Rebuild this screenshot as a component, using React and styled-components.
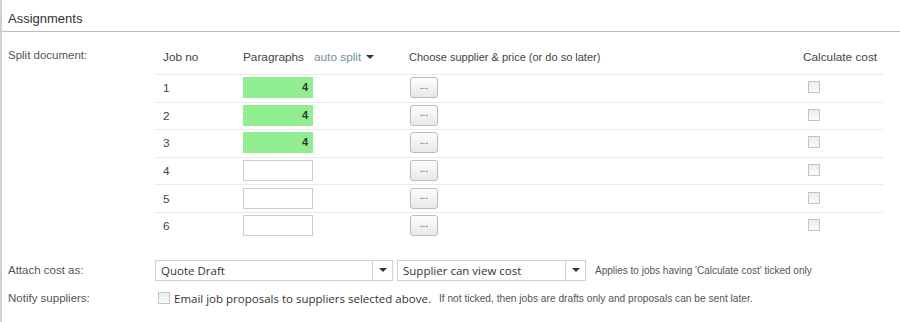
import React from 'react'
import styled, { createGlobalStyle } from 'styled-components'

const GlobalStyle = createGlobalStyle`
  html, body {
    margin: 0;
    padding: 0;
    background: #fff;
  }
  body {
    font-family: "Liberation Sans", Arial, sans-serif;
    color: #444;
  }
`

const Panel = styled.div`
  width: 900px;
  height: 322px;
  box-sizing: border-box;
  border-left: 2px solid #cfcfcf;
  overflow: hidden;
`

const Title = styled.div`
  height: 32px;
  box-sizing: border-box;
  padding: 11px 0 0 6px;
  font-size: 13px;
  color: #333;
  border-bottom: 1px solid #bdbdbd;
`

const Body = styled.div`
  display: flex;
  flex-direction: column;
`

const Field = styled.div`
  display: flex;
  align-items: ${p => (p.top ? 'flex-start' : 'center')};
  margin-top: ${p => p.gap || 0}px;
`

const Label = styled.div`
  width: 153px;
  flex-shrink: 0;
  box-sizing: border-box;
  padding-left: 6px;
  padding-top: ${p => p.pad || 0}px;
  font-size: 11.5px;
  color: #555;
`

const Table = styled.div`
  width: 729px;
  margin-top: 8px;
`

const Row = styled.div`
  display: grid;
  grid-template-columns: 80px 166px 394px 89px;
  align-items: center;
  height: ${p => (p.head ? 34 : 27.6)}px;
  box-sizing: border-box;
  border-top: ${p => (p.head ? 'none' : '1px solid #ebebeb')};
`

const Cell = styled.div`
  display: flex;
  align-items: center;
  padding-left: 8px;
  font-size: ${p => (p.narrow ? 11 : 11.8)}px;
  color: #444;
`

const AutoSplit = styled.span`
  margin-left: 10px;
  color: #6d8ea3;
  display: inline-flex;
  align-items: center;
  gap: 5px;
`

const Caret = styled.span`
  width: 0;
  height: 0;
  border-left: 4px solid transparent;
  border-right: 4px solid transparent;
  border-top: 4px solid #333;
`

const Para = styled.div`
  width: 70px;
  height: 21px;
  margin-top: -1px;
  box-sizing: border-box;
  border: 1px solid ${p => (p.filled ? '#90ee90' : '#cccccc')};
  background: ${p => (p.filled ? '#90ee90' : '#fff')};
  text-align: right;
  padding-right: 4px;
  font-size: 11px;
  font-weight: bold;
  line-height: 19px;
  color: #333;
`

const DotsButton = styled.button`
  width: 28px;
  height: 21px;
  margin: -1px 0 0 1px;
  padding: 0 0 4px;
  border: 1px solid #bcbcbc;
  border-radius: 3px;
  background: linear-gradient(#fdfdfd, #e8e8e8);
  font-family: "Liberation Sans", Arial, sans-serif;
  font-size: 10px;
  color: #444;
  line-height: 1;
`

const Check = styled.span`
  display: inline-block;
  width: 12px;
  height: 12px;
  box-sizing: border-box;
  border: 1px solid #c4c4c4;
  background: linear-gradient(#ececec, #fafafa);
  margin-left: ${p => p.offset || 0}px;
  margin-top: ${p => p.lift || 0}px;
  flex-shrink: 0;
`

const Select = styled.div`
  display: flex;
  width: ${p => p.w}px;
  height: 21px;
  box-sizing: border-box;
  border: 1px solid #d0d0d0;
  background: #fff;
  margin-left: ${p => p.ml || 0}px;
`

const SelectText = styled.div`
  flex: 1;
  padding-left: 5px;
  font-family: "Open Sans", "Liberation Sans", sans-serif;
  font-size: 11.5px;
  line-height: 19px;
  color: #333;
`

const SelectArrow = styled.div`
  width: 19px;
  border-left: 1px solid #d0d0d0;
  display: flex;
  align-items: center;
  justify-content: center;
`

const Note = styled.span`
  font-size: ${p => p.size || 10}px;
  color: #555;
  margin-left: ${p => p.ml || 0}px;
`

const CheckLabel = styled.span`
  font-family: "Open Sans", "Liberation Sans", sans-serif;
  font-size: 11.5px;
  color: #333;
  margin-left: 4px;
`

const jobs = [
  { no: 1, paras: 4 },
  { no: 2, paras: 4 },
  { no: 3, paras: 4 },
  { no: 4 },
  { no: 5 },
  { no: 6 },
]

export default function App() {
  return (
    <Panel>
      <GlobalStyle />
      <Title>Assignments</Title>
      <Body>
        <Field top>
          <Label pad={17}>Split document:</Label>
          <Table>
            <Row head>
              <Cell>Job no</Cell>
              <Cell>
                Paragraphs
                <AutoSplit>
                  auto split <Caret />
                </AutoSplit>
              </Cell>
              <Cell narrow>Choose supplier &amp; price (or do so later)</Cell>
              <Cell>Calculate cost</Cell>
            </Row>
            {jobs.map(j => (
              <Row key={j.no}>
                <Cell>{j.no}</Cell>
                <Cell>
                  <Para filled={!!j.paras}>{j.paras || ''}</Para>
                </Cell>
                <Cell>
                  <DotsButton>...</DotsButton>
                </Cell>
                <Cell>
                  <Check offset={5} lift={-2} />
                </Cell>
              </Row>
            ))}
          </Table>
        </Field>
        <Field gap={20}>
          <Label>Attach cost as:</Label>
          <Select w={238}>
            <SelectText>Quote Draft</SelectText>
            <SelectArrow>
              <Caret />
            </SelectArrow>
          </Select>
          <Select w={189} ml={4}>
            <SelectText>Supplier can view cost</SelectText>
            <SelectArrow>
              <Caret />
            </SelectArrow>
          </Select>
          <Note ml={9}>Applies to jobs having 'Calculate cost' ticked only</Note>
        </Field>
        <Field gap={10}>
          <Label>Notify suppliers:</Label>
          <Check offset={3} />
          <CheckLabel>Email job proposals to suppliers selected above.</CheckLabel>
          <Note ml={8} size={10.2}>If not ticked, then jobs are drafts only and proposals can be sent later.</Note>
        </Field>
      </Body>
    </Panel>
  )
}
